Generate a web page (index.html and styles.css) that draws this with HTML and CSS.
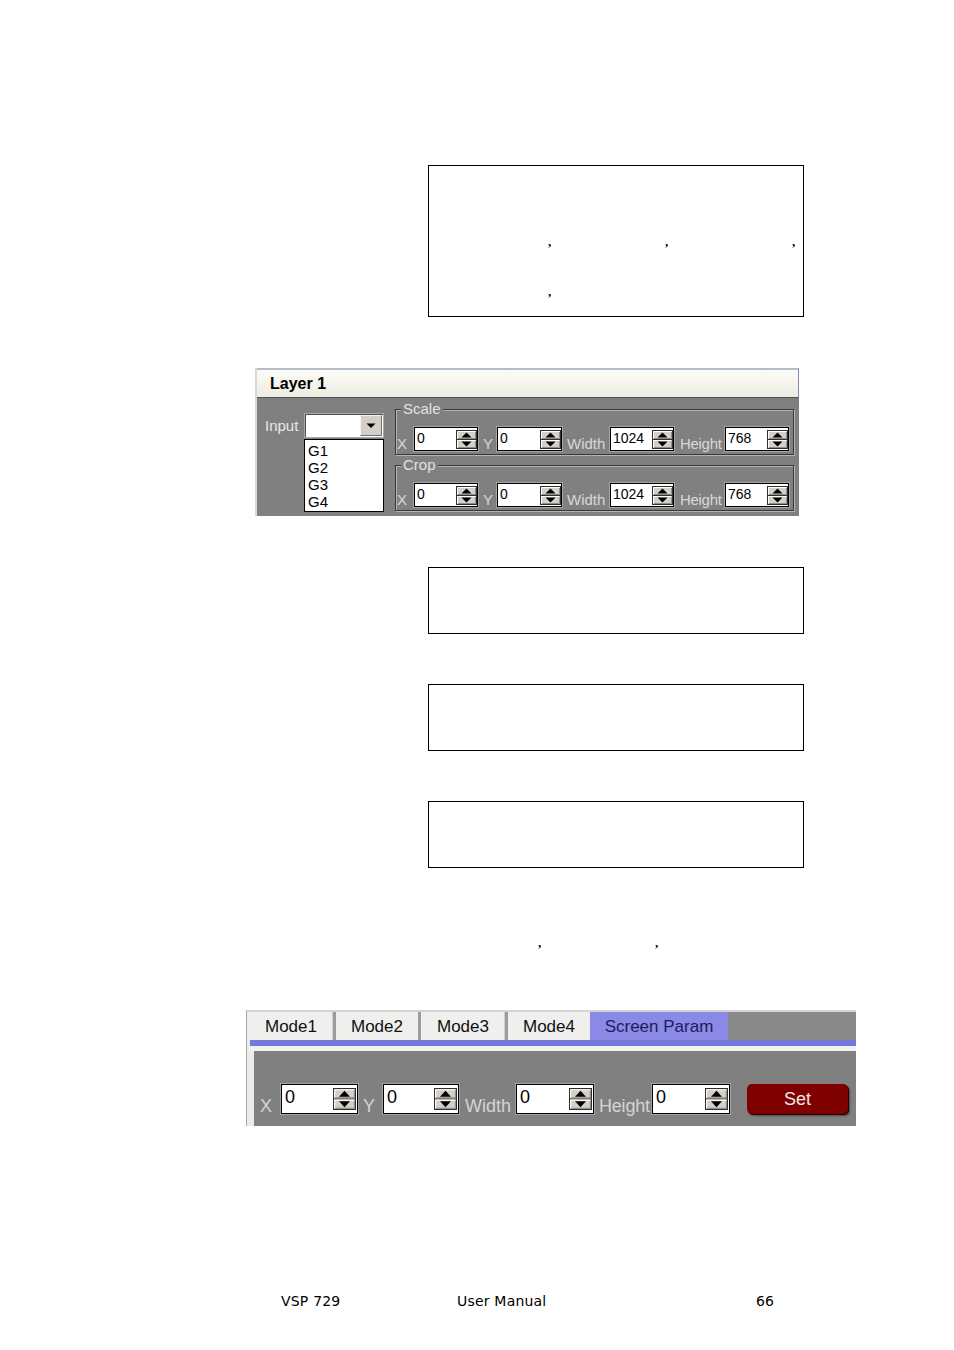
FILE: index.html
```html
<!DOCTYPE html>
<html>
<head>
<meta charset="utf-8">
<link rel="stylesheet" href="styles.css">
</head>
<body>
<svg class="defs" width="0" height="0" aria-hidden="true">
  <symbol id="spin" viewBox="0 0 21 19" preserveAspectRatio="none">
    <rect width="21" height="19" fill="#303030"/>
    <rect x="1" y="1" width="19" height="8" fill="#d4d0c8"/>
    <rect x="1" y="10" width="19" height="8" fill="#d4d0c8"/>
    <path d="M1.5 8.5V1.5H19.5M1.5 17.5V10.5H19.5" fill="none" stroke="#ffffff" stroke-width="1"/>
    <path d="M2 8.5H19.5V2M2 17.5H19.5V11" fill="none" stroke="#8c8c8c" stroke-width="1"/>
    <polygon points="5.5,7.6 15.5,7.6 10.5,2.4" fill="#000"/>
    <polygon points="5.5,11.4 15.5,11.4 10.5,16.6" fill="#000"/>
  </symbol>
</svg>
<div class="page">
  <div class="note note-tall">
    <div class="clines"><span class="cm ca">,</span><span class="cm cb">,</span><span class="cm cc">,</span></div>
    <div class="clines c2"><span class="cm ca">,</span></div>
  </div>

  <section class="layer">
    <div class="layer-head">Layer 1</div>
    <div class="layer-body">
      <div class="input-col">
        <span class="lbl-input">Input</span>
        <div class="select">
          <div class="sel-btn">
            <svg width="22" height="21" viewBox="0 0 22 21">
              <rect width="22" height="21" fill="#d4d0c8"/>
              <path d="M0.5 20.5V0.5H21.5" fill="none" stroke="#f4f4f4"/>
              <path d="M0.5 20.5H21.5V0.5" fill="none" stroke="#707070"/>
              <polygon points="6.5,8.5 15.5,8.5 11,13" fill="#000"/>
            </svg>
          </div>
        </div>
        <ul class="listbox">
          <li>G1</li>
          <li>G2</li>
          <li>G3</li>
          <li>G4</li>
        </ul>
      </div>
      <div class="groups">
        <div class="group">
          <span class="legend">Scale</span>
          <div class="fields">
            <span class="flbl lx">X</span>
            <div class="num n64"><span>0</span><svg class="spin"><use href="#spin"/></svg></div>
            <span class="flbl ly">Y</span>
            <div class="num n65"><span>0</span><svg class="spin"><use href="#spin"/></svg></div>
            <span class="flbl lw">Width</span>
            <div class="num n64"><span>1024</span><svg class="spin"><use href="#spin"/></svg></div>
            <span class="flbl lh">Height</span>
            <div class="num n64"><span>768</span><svg class="spin"><use href="#spin"/></svg></div>
          </div>
        </div>
        <div class="group">
          <span class="legend">Crop</span>
          <div class="fields">
            <span class="flbl lx">X</span>
            <div class="num n64"><span>0</span><svg class="spin"><use href="#spin"/></svg></div>
            <span class="flbl ly">Y</span>
            <div class="num n65"><span>0</span><svg class="spin"><use href="#spin"/></svg></div>
            <span class="flbl lw">Width</span>
            <div class="num n64"><span>1024</span><svg class="spin"><use href="#spin"/></svg></div>
            <span class="flbl lh">Height</span>
            <div class="num n64"><span>768</span><svg class="spin"><use href="#spin"/></svg></div>
          </div>
        </div>
      </div>
    </div>
  </section>

  <div class="note note-a"></div>
  <div class="note note-b"></div>
  <div class="note note-b"></div>

  <div class="clines comma-line"><span class="cm">,</span><span class="cm cd">,</span></div>

  <section class="tabpanel">
    <div class="tabs">
      <div class="tab t1">Mode1</div>
      <div class="tab t2">Mode2</div>
      <div class="tab t1">Mode3</div>
      <div class="tab t4">Mode4</div>
      <div class="tab active">Screen Param</div>
    </div>
    <div class="blue-bar"></div>
    <div class="light-bar"></div>
    <div class="tab-body">
      <span class="tlbl tx">X</span>
      <div class="tnum w77"><span>0</span><svg class="tspin"><use href="#spin"/></svg></div>
      <span class="tlbl ty">Y</span>
      <div class="tnum w76"><span>0</span><svg class="tspin"><use href="#spin"/></svg></div>
      <span class="tlbl tw">Width</span>
      <div class="tnum w78"><span>0</span><svg class="tspin"><use href="#spin"/></svg></div>
      <span class="tlbl th">Height</span>
      <div class="tnum w78"><span>0</span><svg class="tspin"><use href="#spin"/></svg></div>
      <div class="set">Set</div>
    </div>
  </section>

  <footer class="footer">
    <span class="f1">VSP 729</span>
    <span class="f2">User Manual</span>
    <span>66</span>
  </footer>
</div>
</body>
</html>
```

FILE: styles.css
```css
body {
  margin: 0;
  background: #ffffff;
}

.defs {
  position: absolute;
  width: 0;
  height: 0;
  overflow: hidden;
}

.page {
  width: 954px;
  height: 1350px;
  box-sizing: border-box;
  padding-top: 165px;
  overflow: hidden;
  font-family: "Liberation Sans", Arial, sans-serif;
  color: #000;
}

/* Text boxes */
.note {
  margin-left: 428px;
  width: 376px;
  height: 67px;
  box-sizing: border-box;
  border: 1px solid #000;
}

.note-tall {
  height: 152px;
  padding-top: 68px;
}

.note-a {
  margin-top: 51px;
}

.note-b {
  margin-top: 50px;
}

.clines {
  display: flex;
  height: 16px;
  font: bold 13px/16px "Liberation Serif", "Times New Roman", serif;
}

.c2 {
  margin-top: 34px;
}

.cm {
  width: 3px;
}

.ca { margin-left: 119px; }
.cb { margin-left: 114px; }
.cc { margin-left: 124px; }

.comma-line {
  margin-top: 67px;
  padding-left: 538px;
}

.cd { margin-left: 114px; }

/* Layer panel */
.layer {
  margin-top: 51px;
  margin-left: 255px;
  width: 544px;
  height: 148px;
  box-sizing: border-box;
  background: #808080;
  border-left: 2px solid #d8d8d8;
  display: flex;
  flex-direction: column;
}

.layer-head {
  height: 30px;
  box-sizing: border-box;
  border-top: 2px solid #b4bcc8;
  border-right: 1px solid #7a8ca6;
  border-bottom: 1px solid #4c5058;
  background: linear-gradient(#fcfcf8, #edece1);
  font-weight: bold;
  font-size: 16px;
  line-height: 27px;
  padding-left: 13px;
}

.layer-body {
  display: flex;
  align-items: flex-start;
  padding-left: 8px;
}

.input-col {
  display: grid;
  grid-template-columns: 39px 80px;
  margin-top: 15px;
}

.lbl-input {
  color: #e8e8e8;
  font-size: 15px;
  align-self: center;
}

.select {
  height: 25px;
  box-sizing: border-box;
  background: #fff;
  border: 1px solid #a8a8a8;
  box-shadow: inset 1px 1px 0 #505050;
  display: flex;
  justify-content: flex-end;
  align-items: center;
  padding-right: 1px;
}

.sel-btn {
  display: flex;
}

.listbox {
  grid-column: 2;
  margin: 1px 0 0;
  padding: 2px 0 0 3px;
  list-style: none;
  height: 73px;
  box-sizing: border-box;
  background: #fff;
  border: 1px solid #000;
  font-size: 15px;
  line-height: 17px;
}

.groups {
  margin-left: 11px;
  margin-top: 11px;
  width: 399px;
  display: flex;
  flex-direction: column;
  gap: 10px;
}

.group {
  position: relative;
  height: 46px;
  box-sizing: border-box;
  border: 1px solid #383838;
  box-shadow: inset 1px 1px 0 #b4b4b4, 1px 1px 0 #b4b4b4;
  padding: 17px 0 0 1px;
}

.legend {
  position: absolute;
  top: -9px;
  left: 5px;
  padding: 0 2px;
  background: #808080;
  color: #e2e2e2;
  font-size: 15px;
  line-height: 16px;
}

.fields {
  display: flex;
  align-items: flex-end;
}

.flbl {
  color: #d8d8d8;
  font-size: 15px;
  line-height: 14px;
  box-sizing: border-box;
}

.lx { width: 17px; }
.ly { width: 19px; padding-left: 5px; }
.lw { width: 48px; padding-left: 5px; }
.lh { width: 51px; padding-left: 6px; letter-spacing: -0.3px; }

.num {
  height: 24px;
  box-sizing: border-box;
  background: #fff;
  border: 1px solid #000;
  box-shadow: 0 0 0 1px #a4a4a4;
  display: flex;
  justify-content: space-between;
  align-items: flex-start;
  padding-left: 2px;
  font-size: 14px;
  line-height: 20px;
}

.n64 { width: 64px; }
.n65 { width: 65px; }

.spin {
  width: 21px;
  height: 19px;
  align-self: center;
}

/* Tabs panel */
.tabpanel {
  margin-top: 59px;
  margin-left: 246px;
  width: 610px;
  height: 116px;
  box-sizing: border-box;
  background: #ececec;
  border-top: 2px solid #d4d4d4;
  border-left: 1px solid #a8a8a8;
  padding-left: 2px;
  display: flex;
  flex-direction: column;
}

.tabs {
  display: flex;
  height: 28px;
  background: #8a8a8a;
}

.tab {
  box-sizing: border-box;
  background: #efefed;
  font-size: 17px;
  line-height: 29px;
  text-align: center;
  color: #111;
}

.t1 {
  width: 87px;
  border-right: 3px solid #9c9c9c;
  box-shadow: inset -1px 0 0 #d0d0d0;
}

.t2 {
  width: 85px;
  border-right: 3px solid #9c9c9c;
}

.t4 {
  width: 82px;
}

.active {
  width: 138px;
  background: #8a8ae6;
  color: #1c1c5a;
}

.blue-bar {
  height: 6px;
  margin-left: 1px;
  background: #7878da;
}

.light-bar {
  height: 5px;
  background: #f2f2f2;
}

.tab-body {
  flex: 1;
  margin-left: 5px;
  background: #808080;
  padding: 33px 0 0 6px;
  display: flex;
  align-items: flex-start;
}

.tlbl {
  height: 30px;
  box-sizing: border-box;
  color: #d4d4d4;
  font-size: 18px;
  line-height: 16px;
  padding-top: 14px;
}

.tx { width: 21px; }
.ty { width: 25px; padding-left: 5px; }
.tw { width: 57px; padding-left: 6px; }
.th { width: 58px; padding-left: 5px; letter-spacing: -0.2px; }

.tnum {
  height: 30px;
  box-sizing: border-box;
  background: #fff;
  border: 1px solid #000;
  box-shadow: 0 0 0 1px #a4a4a4;
  display: flex;
  justify-content: space-between;
  padding-left: 3px;
  font-size: 18px;
  line-height: 24px;
}

.w76 { width: 76px; }
.w77 { width: 77px; }
.w78 { width: 78px; }

.tspin {
  width: 23px;
  height: 22px;
  align-self: center;
  margin-right: 1px;
}

.set {
  margin-left: 17px;
  width: 101px;
  height: 30px;
  border-radius: 5px;
  background: #7e0000;
  color: #f2e8e8;
  font-size: 18px;
  line-height: 30px;
  text-align: center;
  box-shadow: 1px 1px 0 #2a0000, 2px 2px 2px rgba(0, 0, 0, 0.45);
}

/* Footer */
.footer {
  margin-top: 167px;
  margin-left: 281px;
  display: flex;
  font: 14px/16px "DejaVu Sans", Verdana, sans-serif;
  letter-spacing: 0.2px;
}

.f1 { width: 176px; }
.f2 { width: 299px; }
```
